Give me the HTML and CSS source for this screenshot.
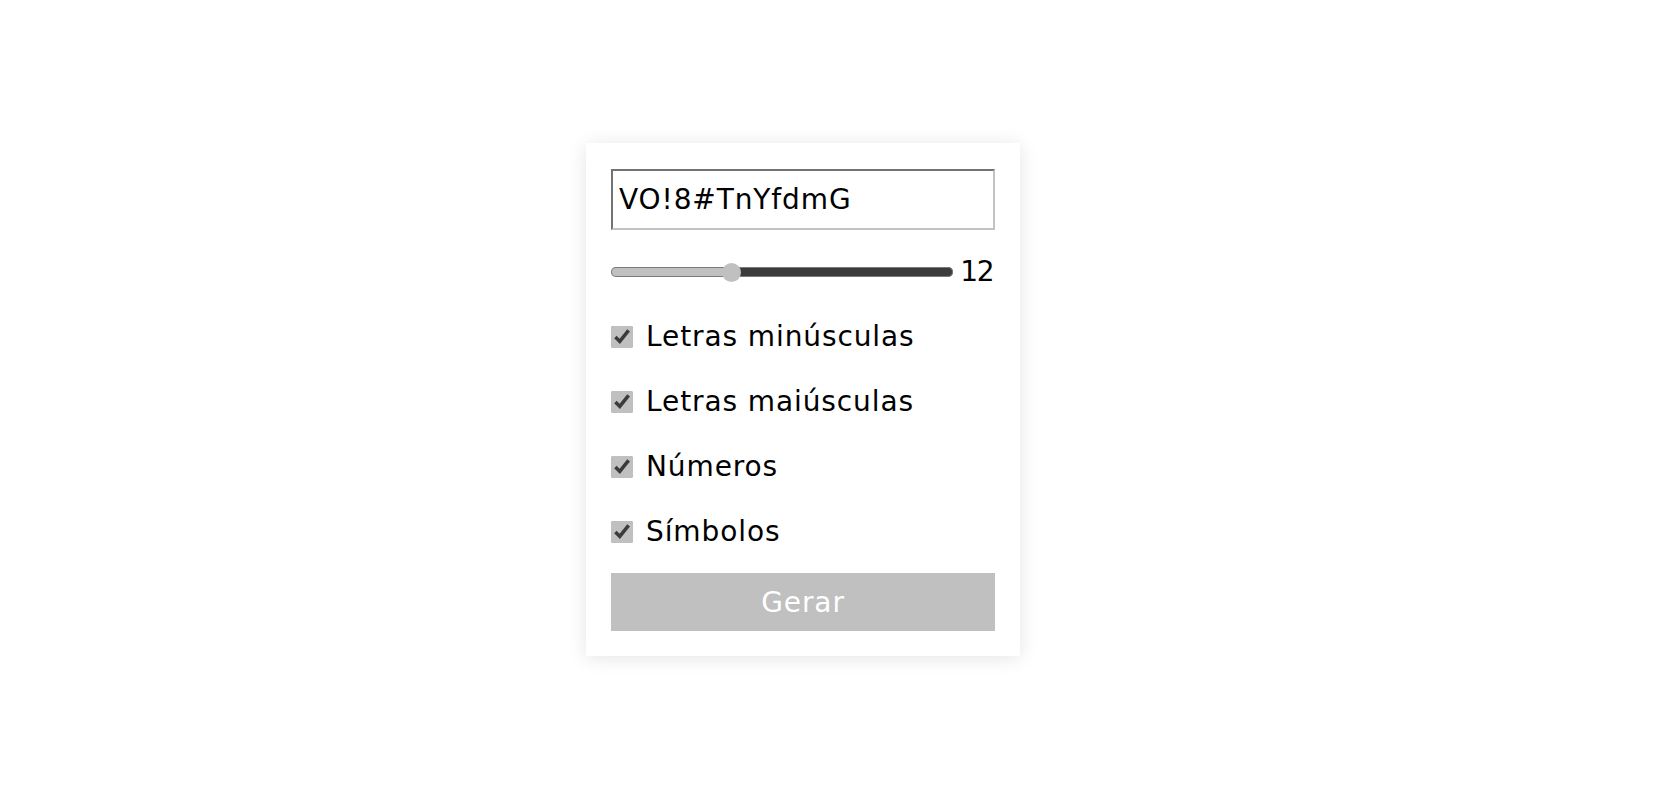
FILE: index.html
```html
<!DOCTYPE html>
<html lang="pt-BR">
<head>
<meta charset="utf-8">
<title>Gerador de senhas</title>
<link rel="stylesheet" href="styles.css">
</head>
<body>
  <main class="card">
    <input class="password" type="text" value="VO!8#TnYfdmG" readonly>
    <div class="length-row">
      <input class="range" type="range" min="1" max="33" value="12" style="--p: 0.34375">
      <span class="length-value">12</span>
    </div>
    <label class="option"><input class="check" type="checkbox" checked><span>Letras minúsculas</span></label>
    <label class="option"><input class="check" type="checkbox" checked><span>Letras maiúsculas</span></label>
    <label class="option"><input class="check" type="checkbox" checked><span>Números</span></label>
    <label class="option"><input class="check" type="checkbox" checked><span>Símbolos</span></label>
    <button class="generate" type="button">Gerar</button>
  </main>
</body>
</html>
```
FILE: styles.css
```css
* { box-sizing: border-box; }

html, body { height: 100%; }

body {
  margin: 0;
  background: #ffffff;
  display: flex;
  justify-content: center;
  align-items: center;
  font-family: "DejaVu Sans", "Liberation Sans", sans-serif;
  font-size: 28px;
  letter-spacing: 0.9px;
  color: #000;
}

.card {
  width: 434px;
  margin-top: 5px;
  margin-right: 52px;
  padding: 26px 25px 25px;
  background: #fff;
  box-shadow: 0 2px 18px rgba(0, 0, 0, 0.11);
  display: flex;
  flex-direction: column;
}

.password {
  width: 100%;
  height: 61px;
  margin: 0;
  padding: 0 6px;
  border-width: 2px;
  border-style: solid;
  border-color: #737373 #c2c2c2 #c2c2c2 #737373;
  font-family: inherit;
  font-size: 28px;
  letter-spacing: 0.9px;
  color: #000;
  background: #fff;
  outline: none;
}

.length-row {
  margin-top: 22px;
  height: 40px;
  display: flex;
  align-items: center;
}

.range {
  -webkit-appearance: none;
  appearance: none;
  width: 342px;
  height: 20px;
  margin: 0;
  background: transparent;
}

.range::-webkit-slider-runnable-track {
  height: 10px;
  border-radius: 5px;
  background: linear-gradient(to right,
    #c0c0c0 calc(9.5px + var(--p) * (100% - 19px)),
    #3b3b3b calc(9.5px + var(--p) * (100% - 19px)));
  box-shadow: inset 0 0 0 1px #7a7a7a;
}

.range::-webkit-slider-thumb {
  -webkit-appearance: none;
  appearance: none;
  width: 19px;
  height: 19px;
  margin-top: -4.5px;
  border: none;
  border-radius: 50%;
  background: #c0c0c0;
}

.length-value {
  margin-left: auto;
  padding-right: 2px;
  line-height: 40px;
  letter-spacing: -1.5px;
}

.option {
  margin-top: 25px;
  height: 40px;
  display: flex;
  align-items: center;
  gap: 13px;
  line-height: 40px;
}

.check {
  width: 22px;
  height: 22px;
  margin: 0;
  accent-color: #c0c0c0;
  flex: none;
}

.generate {
  margin-top: 21px;
  width: 100%;
  height: 58px;
  border: none;
  padding: 0;
  background: #c0c0c0;
  color: #fff;
  font-family: inherit;
  font-size: 28px;
  letter-spacing: 0.9px;
}
```
